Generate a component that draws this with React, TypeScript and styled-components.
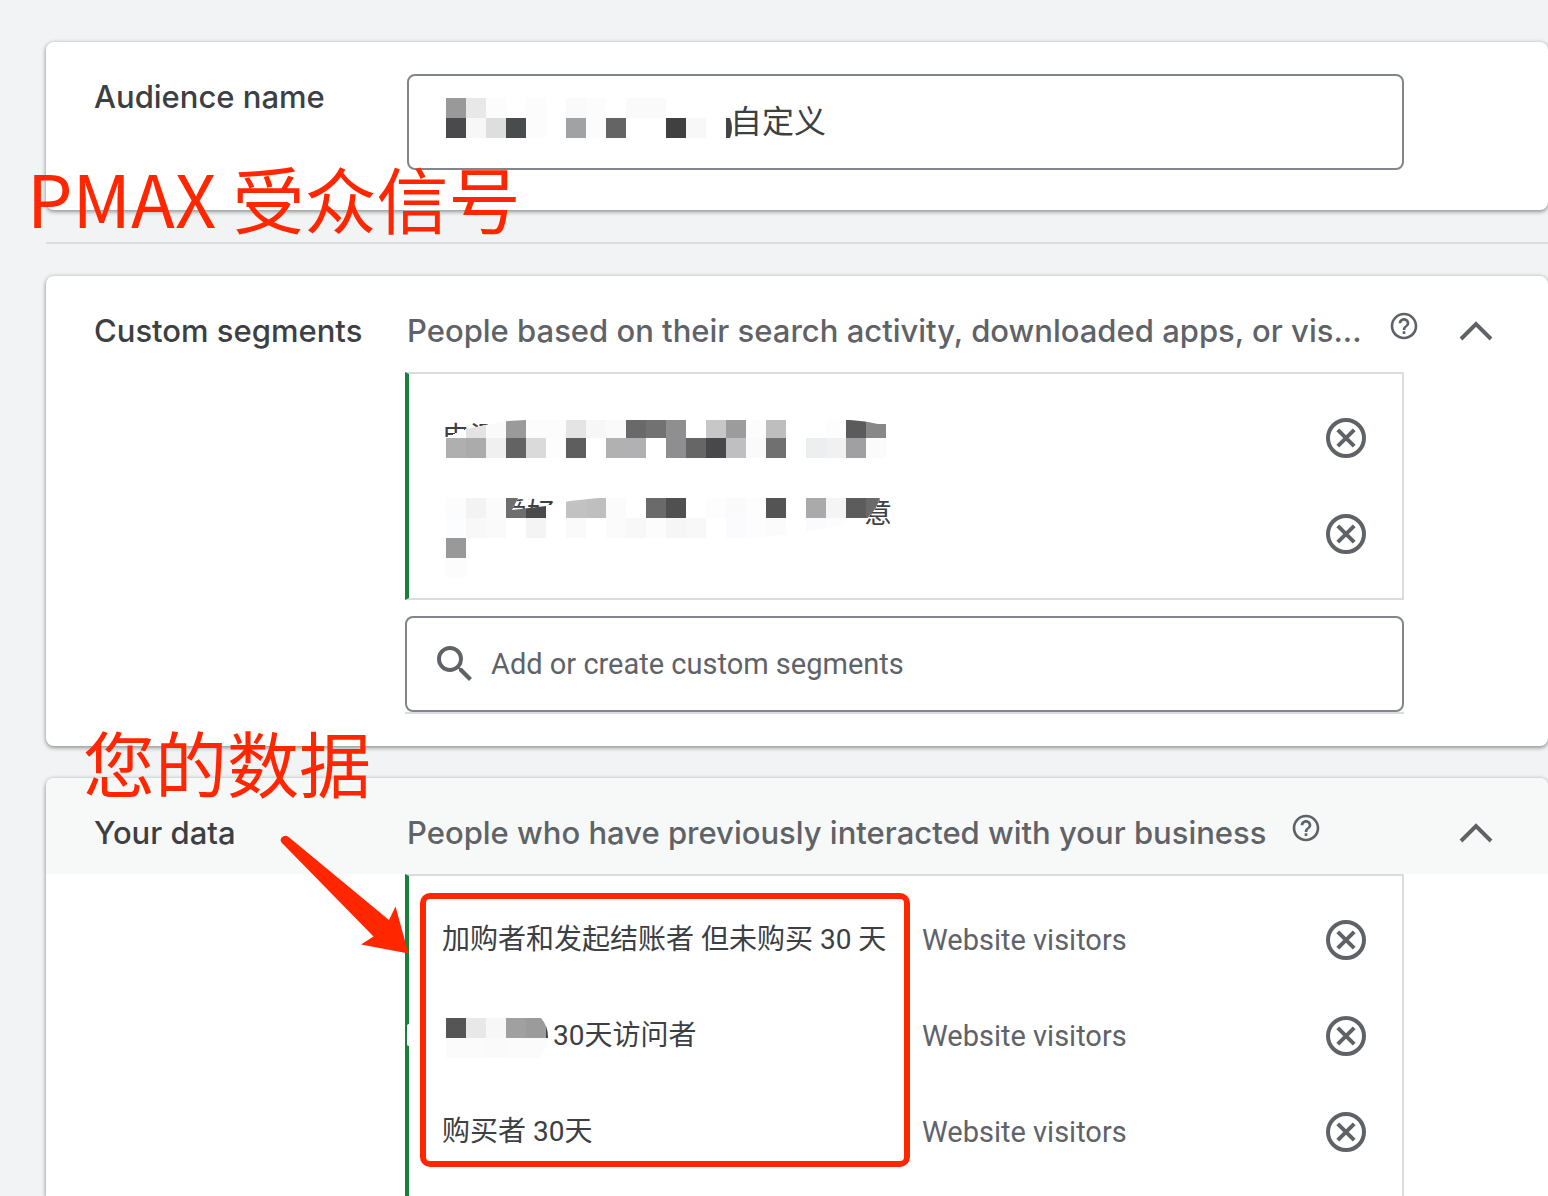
import React, { useId } from "react";
import styled, { createGlobalStyle } from "styled-components";
import { MdHelpOutline, MdSearch } from "react-icons/md";

const red = "#ff2600";
const ink = "#3c4043";
const muted = "#5f6368";
const line = "#dadce0";
const headingFont = `Inter, "Noto Sans CJK SC", sans-serif`;
const bodyFont = `Roboto, "Noto Sans CJK SC", sans-serif`;

const GlobalStyle = createGlobalStyle`
  *, *::before, *::after { box-sizing: border-box; }
  body { margin: 0; background: #f1f3f4; color: ${ink}; font-family: ${bodyFont}; }
`;

const Page = styled.main`
  position: relative;
  display: flex;
  flex-direction: column;
  min-height: 100vh;
  padding: 42px 0 0 46px;
  overflow: hidden;
`;

const Card = styled.section<{ $grow?: boolean }>`
  flex: ${(p) => (p.$grow ? "1 0 auto" : "none")};
  display: flex;
  flex-direction: column;
  background: #fff;
  border-radius: ${(p) => (p.$grow ? "8px 8px 0 0" : "8px")};
  box-shadow: 0 2px 4px rgba(32, 40, 38, 0.4), 0 0 4px rgba(60, 64, 67, 0.2);
`;

const Divider = styled.hr`
  width: 100%;
  height: 2px;
  margin: 32px 0;
  border: 0;
  background: ${line};
`;

const NameForm = styled.div`
  display: grid;
  grid-template-columns: 313px minmax(0, 1fr);
  padding: 32px 144px 40px 48px;
`;

const FieldLabel = styled.label`
  font: 500 31px/46px ${headingFont};
`;

const NameField = styled.div`
  display: flex;
  align-items: center;
  height: 96px;
  padding: 0 36px;
  border: 2px solid #80868b;
  border-radius: 8px;
`;

const TextInput = styled.input`
  flex: 1;
  min-width: 0;
  padding: 0;
  border: 0;
  outline: 0;
  background: transparent;
  color: ${ink};
  font: 400 32px/40px ${bodyFont};
`;

const Header = styled.header<{ $tinted?: boolean }>`
  display: grid;
  grid-template-columns: 313px minmax(0, 1fr) 80px;
  align-items: center;
  height: 96px;
  padding: 14px 48px 0 48px;
  border-radius: 8px 8px 0 0;
  background: ${(p) => (p.$tinted ? "#f7f9f8" : "transparent")};
`;

const SectionName = styled.h2`
  margin: 0;
  font: 500 31px/46px ${headingFont};
`;

const Summary = styled.div`
  display: flex;
  align-items: center;
  gap: 24px;
`;

const SummaryText = styled.p<{ $fill?: boolean }>`
  flex: ${(p) => (p.$fill ? "1 1 0" : "0 1 auto")};
  min-width: 0;
  margin: 0;
  overflow: hidden;
  text-overflow: ellipsis;
  white-space: nowrap;
  color: ${muted};
  font: 500 31px/46px ${headingFont};
`;

const IconButton = styled.button`
  display: flex;
  justify-content: center;
  align-items: center;
  width: 48px;
  height: 48px;
  padding: 0;
  border: 0;
  background: transparent;
  color: ${muted};
  cursor: pointer;
`;

const HelpButton = styled(IconButton)`
  flex: none;
  width: 32px;
  height: 32px;
  margin-bottom: 10px;
`;

const CollapseButton = styled(IconButton)`
  justify-self: end;
`;

const Body = styled.div<{ $grow?: boolean }>`
  display: flex;
  flex-direction: column;
  flex: ${(p) => (p.$grow ? "1 0 auto" : "none")};
  padding: 0 144px ${(p) => (p.$grow ? "0" : "32px")} 359px;
`;

const Panel = styled.ul<{ $grow?: boolean }>`
  position: relative;
  flex: ${(p) => (p.$grow ? "1 0 auto" : "none")};
  margin: 0;
  padding: 16px 0 ${(p) => (p.$grow ? "0" : "16px")};
  list-style: none;
  border: 2px solid ${line};
  border-left: 4px solid #188038;
  ${(p) => p.$grow && "border-bottom: 0;"}
`;

const Row = styled.li`
  position: relative;
  display: grid;
  grid-template-columns: 480px minmax(0, 1fr) 48px;
  align-items: center;
  height: 96px;
  padding: 0 32px 0 33px;
  font-size: 28px;
  line-height: 40px;
`;

const RowType = styled.span`
  color: ${muted};
  font-size: 29px;
`;

const Masked = styled.div`
  display: grid;
  width: 450px;
  align-items: center;
  & > * { grid-area: 1 / 1; }
`;

const MaskedText = styled.span<{ $indent?: number; $lines?: number }>`
  display: flex;
  justify-content: space-between;
  height: ${(p) => (p.$lines ?? 1) * 40}px;
  padding-left: ${(p) => p.$indent ?? 0}px;
`;

const MosaicArt = styled.svg`
  display: block;
  flex: none;
`;

const BorderGap = styled.span`
  position: absolute;
  top: 36px;
  left: -2px;
  width: 2px;
  height: 22px;
  border-radius: 2px 0 0 2px;
  background: #fff;
`;

const SearchBar = styled.div`
  margin-top: 16px;
  border-bottom: 2px solid ${line};
`;

const SearchField = styled.label`
  display: flex;
  align-items: center;
  gap: 12px;
  height: 96px;
  padding: 0 24px;
  border: 2px solid #80868b;
  border-radius: 8px;
  color: ${muted};
`;

const SearchInput = styled(TextInput)`
  font-size: 29px;
  &::placeholder { color: ${muted}; opacity: 1; }
`;

const Gap = styled.div`
  height: 32px;
`;

const Note = styled.div<{ $top: number; $left: number }>`
  position: absolute;
  top: ${(p) => p.$top}px;
  left: ${(p) => p.$left}px;
  color: ${red};
  font: 400 72px/104px "Noto Sans CJK SC", sans-serif;
  white-space: nowrap;
  pointer-events: none;
`;

const Frame = styled.div`
  position: absolute;
  top: 17px;
  left: 11px;
  width: 490px;
  height: 274px;
  border: 6px solid ${red};
  border-radius: 10px;
  pointer-events: none;
`;

const Arrow = styled.svg`
  position: absolute;
  top: 830px;
  left: 276px;
  pointer-events: none;
`;

type MosaicProps = {
  width: number;
  height: number;
  x: number;
  y: number;
  shape: string;
  rows: string[];
};

const CELL = 20;

// Each row is a space-separated list of hex greys; "-" leaves the cell white.
function Mosaic({ width, height, x, y, shape, rows }: MosaicProps) {
  const id = useId();
  return (
    <MosaicArt width={width} height={height} overflow="visible" shapeRendering="crispEdges" aria-hidden="true">
      <clipPath id={id}>
        <path d={shape} />
      </clipPath>
      <path d={shape} fill="#fff" />
      <g clipPath={`url(#${id})`}>
        {rows.map((row, r) =>
          row.split(" ").map((c, i) =>
            c === "-" ? null : (
              <rect key={`${r}-${i}`} x={x + i * CELL} y={y + r * CELL} width={CELL} height={CELL} fill={`#${c}`} />
            )
          )
        )}
      </g>
    </MosaicArt>
  );
}

const nameMosaic: MosaicProps = {
  width: 285,
  height: 48,
  x: 1,
  y: 0,
  shape: "M1 0H281V20H285Q289 30 285 40H1Z",
  rows: [
    "999 e8e8e8 fcfcfc - fcfcfc - fafafa fcfcfc - fafafa fafafa",
    "4a4a4c f7f7f7 dedede 484c4c fcfcfc - a0a2a3 fcfcfc 646464 - - 404040 f8f8f8 - 444",
  ],
};

const segmentMosaics: MosaicProps[] = [
  {
    width: 450,
    height: 96,
    x: 4,
    y: 28,
    shape: "M2 48L24 39L48 34L66 31L84 30H408Q424 31 436 34H444V68H2Z",
    rows: [
      "- e3e3e3 fafafa 9a9a9a fcfcfc fcfcfc e4e4e4 f7f7f7 fafafa 696969 727272 8f8f8f - c7c7c7 9c9c9c fcfcfc bebebe - - fdfdfd 5b5b5b 888",
      "afafaf ababab f0f0f0 636363 dadada fdfdfd 5e5e5e - b1b1b1 b1b1b3 - 8e8e90 666 48484a bfbfc1 fafafa 707070 - eceef0 f1f1f1 a0a0a2 fbfbfb",
    ],
  },
  {
    width: 450,
    height: 96,
    x: 4,
    y: 12,
    shape: "M4 12H76L70 24L104 20L128 15L156 12H438L434 22L424 34L398 40L318 52H24V92H4Z",
    rows: [
      "fcfcfd f3f3f3 fbfbfb 6e6e6e 4a4a4a - c2c2c2 bfbfbf fbfbfb - 6a6a6a 505050 - fdfdfd fafafa fdfdfd 545454 - aaa f5f5f5 5c5c5c 6a6a6a",
      "fcfdff f8f8f8 fafafa - f4f4f4 - fafafa - fbfbfb f8f8f8 fcfcfc f6f6f6 f8f8f8 - fafaff fdfdfd fbfbfb - fafaff fdfdfd",
      "999",
      "fcfcfc",
    ],
  },
];

const visitorMosaic: MosaicProps = {
  width: 111,
  height: 96,
  x: 4,
  y: 30,
  shape: "M4 30H99Q106 38 106 49Q105 62 97 70H4Z",
  rows: ["555 e8e8e8 f7f7f7 a0a0a0 9b9b9b 444", "fbfbfb fbfbfb fafafa fbfbfb fbfbfb fbfbfb"],
};

const VisitorName = styled.span`
  display: flex;
  align-items: center;
`;

function RemoveButton({ label }: { label: string }) {
  return (
    <IconButton type="button" aria-label={label}>
      <svg width="48" height="48" viewBox="0 0 24 24" fill="none" stroke="currentColor" strokeWidth="2">
        <circle cx="12" cy="12" r="9" />
        <path d="M7.900 7.900L16.100 16.100M16.100 7.900L7.900 16.100" />
      </svg>
    </IconButton>
  );
}

type SectionHeaderProps = { name: string; summary: string; fill?: boolean; tinted?: boolean };

function SectionHeader({ name, summary, fill, tinted }: SectionHeaderProps) {
  return (
    <Header $tinted={tinted}>
      <SectionName>{name}</SectionName>
      <Summary>
        <SummaryText $fill={fill}>{summary}</SummaryText>
        <HelpButton type="button" aria-label="Help">
          <MdHelpOutline size={32} />
        </HelpButton>
      </Summary>
      <CollapseButton type="button" aria-label="Collapse">
        <svg width="48" height="48" fill="none" stroke="currentColor" strokeWidth="4">
          <path d="M9 32L24 17L39 32" />
        </svg>
      </CollapseButton>
    </Header>
  );
}

export default function App() {
  return (
    <Page>
      <GlobalStyle />
      <Card>
        <NameForm>
          <FieldLabel htmlFor="audience-name">Audience name</FieldLabel>
          <NameField>
            <Mosaic {...nameMosaic} />
            <TextInput id="audience-name" type="text" defaultValue="自定义" />
          </NameField>
        </NameForm>
      </Card>
      <Divider />
      <Card>
        <SectionHeader
          name="Custom segments"
          summary="People based on their search activity, downloaded apps, or vis..."
          fill
        />
        <Body>
          <Panel>
            <Row>
              <Masked>
                <MaskedText>电源</MaskedText>
                <Mosaic {...segmentMosaics[0]} />
              </Masked>
              <span />
              <RemoveButton label="Remove segment" />
            </Row>
            <Row>
              <Masked>
                <MaskedText $indent={57} $lines={2}>
                  <span>爱好</span>
                  <span>意</span>
                </MaskedText>
                <Mosaic {...segmentMosaics[1]} />
              </Masked>
              <span />
              <RemoveButton label="Remove segment" />
            </Row>
          </Panel>
          <SearchBar>
            <SearchField>
              <MdSearch size={48} />
              <SearchInput
                type="text"
                aria-label="Add or create custom segments"
                placeholder="Add or create custom segments"
              />
            </SearchField>
          </SearchBar>
        </Body>
      </Card>
      <Gap />
      <Card $grow>
        <SectionHeader name="Your data" summary="People who have previously interacted with your business" tinted />
        <Body $grow>
          <Panel $grow>
            <Row>
              <span>加购者和发起结账者 但未购买 30 天</span>
              <RowType>Website visitors</RowType>
              <RemoveButton label="Remove audience" />
            </Row>
            <Row>
              <BorderGap />
              <VisitorName>
                <Mosaic {...visitorMosaic} />
                30天访问者
              </VisitorName>
              <RowType>Website visitors</RowType>
              <RemoveButton label="Remove audience" />
            </Row>
            <Row>
              <span>购买者 30天</span>
              <RowType>Website visitors</RowType>
              <RemoveButton label="Remove audience" />
            </Row>
            <Frame />
          </Panel>
        </Body>
      </Card>
      <Note $top={145} $left={27}>PMAX 受众信号</Note>
      <Note $top={709} $left={83}>您的数据</Note>
      <Arrow width="136" height="128" viewBox="0 0 136 128" fill={red} aria-hidden="true">
        <path d="M4.500 10A5 5 0 0 1 12 6.500L113 90L119.500 76.500L132.500 123.500L85 114.500L97.500 106.500L5.500 12.500Z" />
      </Arrow>
    </Page>
  );
}
